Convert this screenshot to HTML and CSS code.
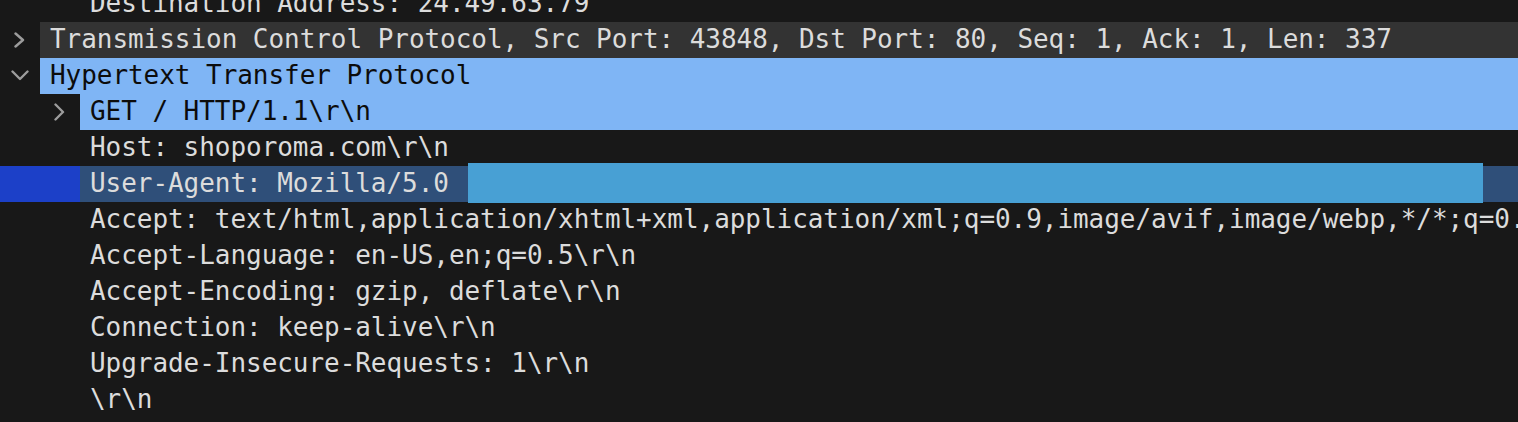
FILE: index.html
```html
<!DOCTYPE html>
<html>
<head>
<meta charset="utf-8">
<link rel="stylesheet" href="styles.css">
</head>
<body>
<div class="tree">
  <div class="row"><span class="indent"></span><span class="twisty"></span><span class="label">Destination Address: 24.49.63.79</span></div>
  <div class="row"><span class="twisty"><svg width="12" height="16" viewBox="0 0 12 16"><polyline points="1.5,1.5 9,8 1.5,14.5" class="chev"/></svg></span><span class="label grey">Transmission Control Protocol, Src Port: 43848, Dst Port: 80, Seq: 1, Ack: 1, Len: 337</span></div>
  <div class="row"><span class="twisty"><svg width="18" height="12" viewBox="0 0 18 12"><polyline points="1.5,1.5 9,9 16.5,1.5" class="chev"/></svg></span><span class="label sel">Hypertext Transfer Protocol</span></div>
  <div class="row"><span class="indent"></span><span class="twisty"><svg width="12" height="18" viewBox="0 0 12 18"><polyline points="1.5,1.5 9,9 1.5,16.5" class="chev"/></svg></span><span class="label sel">GET / HTTP/1.1\r\n</span></div>
  <div class="row"><span class="indent"></span><span class="twisty"></span><span class="label">Host: shoporoma.com\r\n</span></div>
  <div class="row current"><span class="gutter"></span><span class="label cur">User-Agent: Mozilla/5.0</span><span class="redact"></span></div>
  <div class="row"><span class="indent"></span><span class="twisty"></span><span class="label">Accept: text/html,application/xhtml+xml,application/xml;q=0.9,image/avif,image/webp,*/*;q=0.8\r\n</span></div>
  <div class="row"><span class="indent"></span><span class="twisty"></span><span class="label">Accept-Language: en-US,en;q=0.5\r\n</span></div>
  <div class="row"><span class="indent"></span><span class="twisty"></span><span class="label">Accept-Encoding: gzip, deflate\r\n</span></div>
  <div class="row"><span class="indent"></span><span class="twisty"></span><span class="label">Connection: keep-alive\r\n</span></div>
  <div class="row"><span class="indent"></span><span class="twisty"></span><span class="label">Upgrade-Insecure-Requests: 1\r\n</span></div>
  <div class="row"><span class="indent"></span><span class="twisty"></span><span class="label">\r\n</span></div>
</div>
</body>
</html>
```
FILE: styles.css
```css
html, body {
  margin: 0;
  padding: 0;
  background: #181818;
  width: 1518px;
  height: 422px;
  overflow: hidden;
}
.tree {
  margin-top: -14px;
  display: flex;
  flex-direction: column;
  font-family: "DejaVu Sans Mono", monospace;
  font-size: 26px;
  letter-spacing: -0.05px;
  line-height: 35px;
  color: #dcdcdc;
}
.row {
  display: flex;
  height: 36px;
  position: relative;
  white-space: pre;
}
.indent {
  flex: 0 0 40px;
}
.twisty {
  flex: 0 0 40px;
  display: flex;
  align-items: center;
  justify-content: center;
}
.twisty svg {
  display: block;
}
.chev {
  fill: none;
  stroke: #9c9c9c;
  stroke-width: 2.4;
  stroke-linecap: round;
  stroke-linejoin: round;
}
.label {
  flex: 1 1 auto;
  min-width: 0;
  overflow: hidden;
  padding-left: 10px;
}
.grey {
  background: #333333;
}
.sel {
  background: #7fb5f5;
  color: #0c0c0c;
}
.gutter {
  flex: 0 0 80px;
  background: #1c40c8;
}
.cur {
  background: #2f4f79;
  color: #dcdcdc;
}
.redact {
  position: absolute;
  left: 468px;
  top: -3px;
  width: 1015px;
  height: 40px;
  background: #48a0d4;
}
```
